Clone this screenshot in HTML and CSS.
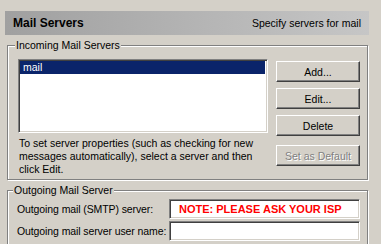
FILE: index.html
```html
<!DOCTYPE html>
<html lang="en">
<head>
    <meta charset="UTF-8">
    <meta name="viewport" content="width=device-width, initial-scale=1.0">
    <title>Mail Servers</title>
    <link rel="stylesheet" href="styles.css">
</head>
<body>
    <div class="dialog">
        <div class="header">
            <span class="header-title">Mail Servers</span>
            <span class="header-hint">Specify servers for mail</span>
        </div>

        <fieldset class="group incoming">
            <legend>Incoming Mail Servers</legend>
            <div class="incoming-body">
                <div class="incoming-left">
                    <div class="listbox">
                        <div class="list-item selected">mail</div>
                    </div>
                    <p class="hint">To set server properties (such as checking for new messages automatically), select a server and then click Edit.</p>
                </div>
                <div class="buttons">
                    <button class="btn">Add...</button>
                    <button class="btn">Edit...</button>
                    <button class="btn">Delete</button>
                    <button class="btn btn-default" disabled>Set as Default</button>
                </div>
            </div>
        </fieldset>

        <fieldset class="group outgoing">
            <legend>Outgoing Mail Server</legend>
            <div class="form-grid">
                <label for="smtp">Outgoing mail (SMTP) server:</label>
                <input type="text" id="smtp" class="field field-note" value="NOTE: PLEASE ASK YOUR ISP">
                <label for="smtpUser">Outgoing mail server user name:</label>
                <input type="text" id="smtpUser" class="field">
            </div>
        </fieldset>
    </div>
</body>
</html>
```

FILE: styles.css
```css
:root {
    --face: #d4d0c8;
    --shadow: #808080;
    --dark: #404040;
    --light: #ffffff;
    --select: #0a246a;
}

body {
    margin: 0;
    background-color: var(--face);
    font-family: 'Liberation Sans', Arial, sans-serif;
    font-size: 10.5px;
    color: #000;
}

.dialog {
    width: 364px;
    padding: 11px 0 0 5px;
}

.header {
    height: 24px;
    display: flex;
    align-items: center;
    justify-content: space-between;
    padding: 0 8px 0 8px;
    background: linear-gradient(to right, #a0a0a0, #c6c6c6);
}

.header-title {
    font-weight: bold;
    font-size: 12px;
}

.header-hint {
    font-size: 10.5px;
}

.group {
    width: 361px;
    box-sizing: border-box;
    margin: 4px 0 0 2px;
    border: 1px solid var(--shadow);
    box-shadow: inset 1px 1px 0 var(--light), 1px 1px 0 var(--light);
    min-width: 0;
}

.group legend {
    background-color: var(--face);
    line-height: 13px;
    padding: 0 1px;
    margin-left: -3px;
}

.incoming {
    padding: 7px 7px 3px 10px;
}

.incoming-body {
    display: grid;
    grid-template-columns: 250px 84px;
    gap: 8px;
}

.listbox {
    height: 74px;
    box-sizing: border-box;
    background: white;
    border: 1px solid;
    border-color: var(--shadow) var(--light) var(--light) var(--shadow);
    box-shadow: inset 1px 1px 0 var(--dark), inset -1px -1px 0 var(--face);
    padding: 1px 2px 2px 1px;
}

.list-item {
    height: 13px;
    line-height: 13px;
    padding-left: 3px;
}

.list-item.selected {
    background-color: var(--select);
    color: white;
}

.hint {
    margin: 4px 0 0 1px;
    line-height: 13px;
}

.buttons {
    display: flex;
    flex-direction: column;
    padding-top: 2px;
}

.btn {
    height: 21px;
    margin-bottom: 6px;
    font-family: inherit;
    font-size: 10.5px;
    color: #000;
    background-color: var(--face);
    border: 1px solid;
    border-color: var(--light) var(--dark) var(--dark) var(--light);
    box-shadow: inset -1px -1px 0 var(--shadow), inset 1px 1px 0 var(--face);
    padding: 0;
}

.btn-default {
    margin-top: 3px;
    color: var(--shadow);
    text-shadow: 1px 1px 0 var(--light);
}

.outgoing {
    padding: 2px 7px 20px 8px;
}

.form-grid {
    display: grid;
    grid-template-columns: 153px 191px;
    row-gap: 2px;
    align-items: center;
}

.form-grid label {
    padding-left: 1px;
    white-space: nowrap;
    letter-spacing: -0.1px;
}

.field {
    height: 20px;
    box-sizing: border-box;
    margin: 0;
    padding: 0 0 0 9px;
    background: white;
    border: 1px solid;
    border-color: var(--shadow) var(--light) var(--light) var(--shadow);
    box-shadow: inset 1px 1px 0 var(--dark), inset -1px -1px 0 var(--face);
    font-family: inherit;
    font-size: 10.5px;
    outline: none;
}

.field-note {
    color: #ff0000;
    font-weight: bold;
    font-size: 11px;
}
```
